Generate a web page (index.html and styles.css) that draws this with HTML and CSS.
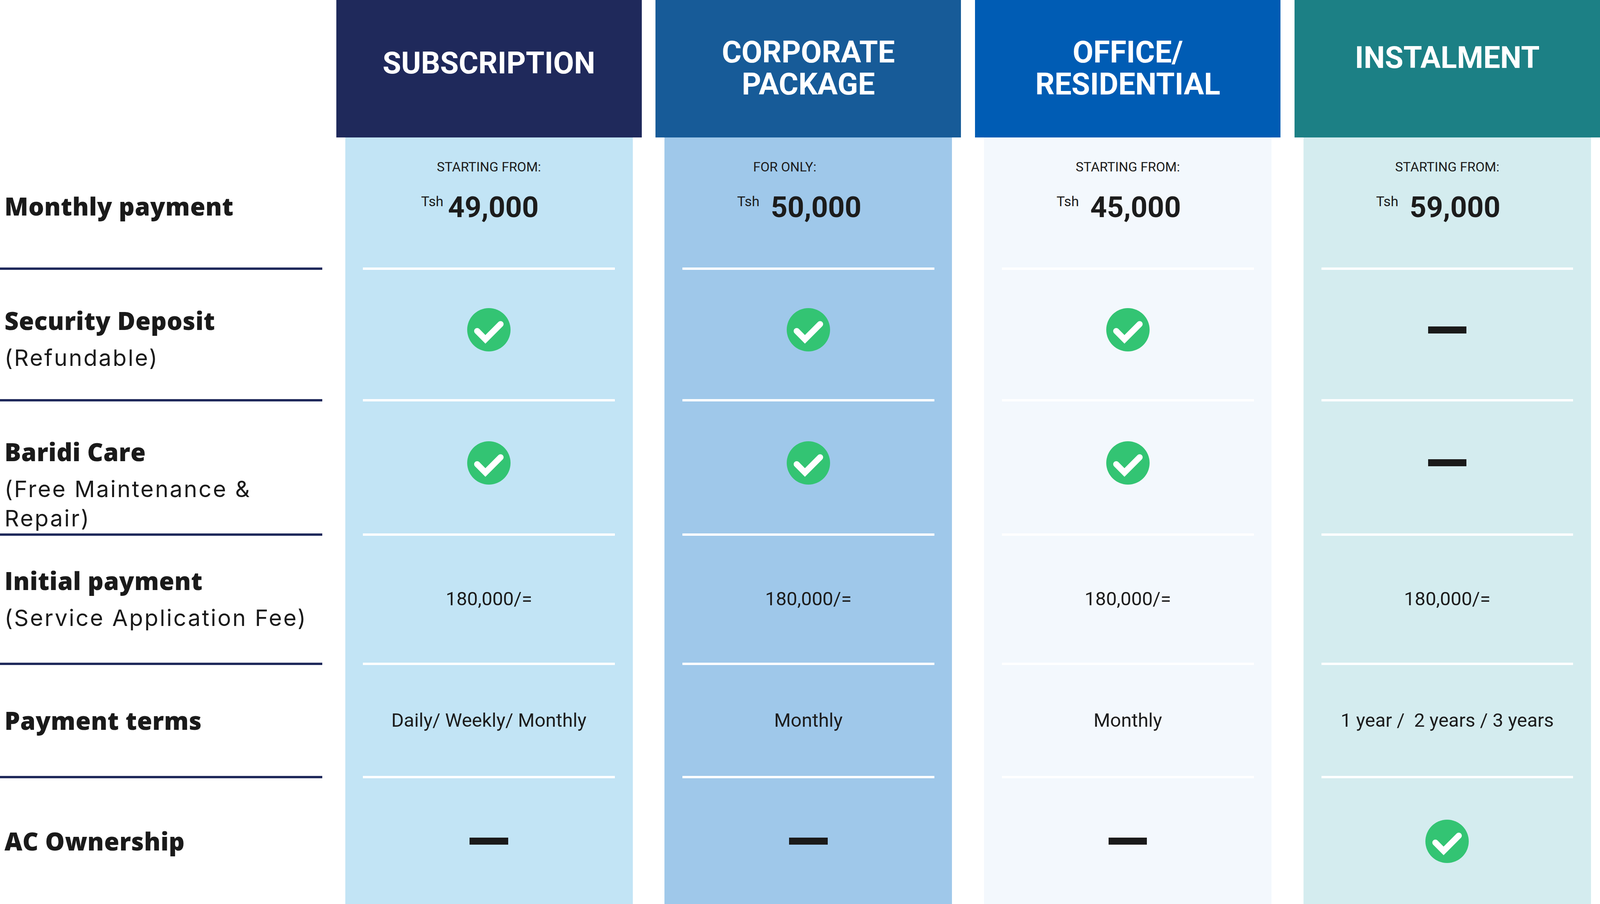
FILE: index.html
```html
<!DOCTYPE html>
<html lang="en">
<head>
<meta charset="utf-8">
<title>Plans comparison</title>
<link rel="stylesheet" href="styles.css">
</head>
<body>
<div class="table">
  <div class="col labels">
    <div class="head-spacer"></div>
    <div class="cell r1 lbl-first"><span class="lbl-b">Monthly payment</span></div>
    <div class="cell r2 lbl-two"><span class="lbl-b">Security Deposit</span><span class="lbl-l">(Refundable)</span></div>
    <div class="cell r3 lbl-low"><span class="lbl-b">Baridi Care</span><span class="lbl-l">(Free Maintenance &amp;<br>Repair)</span></div>
    <div class="cell r4"><span class="lbl-b">Initial payment</span><span class="lbl-l">(Service Application Fee)</span></div>
    <div class="cell r5"><span class="lbl-b">Payment terms</span></div>
    <div class="cell r6"><span class="lbl-b">AC Ownership</span></div>
  </div>

  <div class="col plan plan-sub">
    <div class="plan-head one-line"><h2>SUBSCRIPTION</h2></div>
    <div class="plan-body">
      <div class="cell r1 price-cell">
        <div class="from">STARTING FROM:</div>
        <div class="price tight"><span class="cur">Tsh</span><span class="amt">49,000</span></div>
      </div>
      <div class="cell r2 icon-cell"><svg class="check" viewBox="0 0 100 100"><circle cx="50" cy="50" r="50"/><path d="M23 53 L42 72 L77 37"/></svg></div>
      <div class="cell r3 icon-cell"><svg class="check" viewBox="0 0 100 100"><circle cx="50" cy="50" r="50"/><path d="M23 53 L42 72 L77 37"/></svg></div>
      <div class="cell r4"><span class="val">180,000/=</span></div>
      <div class="cell r5"><span class="val">Daily/ Weekly/ Monthly</span></div>
      <div class="cell r6"><span class="dash"></span></div>
    </div>
  </div>

  <div class="col plan plan-corp">
    <div class="plan-head"><h2>CORPORATE<br>PACKAGE</h2></div>
    <div class="plan-body">
      <div class="cell r1 price-cell">
        <div class="from from-left">FOR ONLY:</div>
        <div class="price"><span class="cur">Tsh</span><span class="amt">50,000</span></div>
      </div>
      <div class="cell r2 icon-cell"><svg class="check" viewBox="0 0 100 100"><circle cx="50" cy="50" r="50"/><path d="M23 53 L42 72 L77 37"/></svg></div>
      <div class="cell r3 icon-cell"><svg class="check" viewBox="0 0 100 100"><circle cx="50" cy="50" r="50"/><path d="M23 53 L42 72 L77 37"/></svg></div>
      <div class="cell r4"><span class="val">180,000/=</span></div>
      <div class="cell r5"><span class="val">Monthly</span></div>
      <div class="cell r6"><span class="dash"></span></div>
    </div>
  </div>

  <div class="col plan plan-office">
    <div class="plan-head"><h2>OFFICE/<br>RESIDENTIAL</h2></div>
    <div class="plan-body">
      <div class="cell r1 price-cell">
        <div class="from">STARTING FROM:</div>
        <div class="price"><span class="cur">Tsh</span><span class="amt">45,000</span></div>
      </div>
      <div class="cell r2 icon-cell"><svg class="check" viewBox="0 0 100 100"><circle cx="50" cy="50" r="50"/><path d="M23 53 L42 72 L77 37"/></svg></div>
      <div class="cell r3 icon-cell"><svg class="check" viewBox="0 0 100 100"><circle cx="50" cy="50" r="50"/><path d="M23 53 L42 72 L77 37"/></svg></div>
      <div class="cell r4"><span class="val">180,000/=</span></div>
      <div class="cell r5"><span class="val">Monthly</span></div>
      <div class="cell r6"><span class="dash"></span></div>
    </div>
  </div>

  <div class="col plan plan-inst">
    <div class="plan-head one-line high"><h2>INSTALMENT</h2></div>
    <div class="plan-body">
      <div class="cell r1 price-cell">
        <div class="from">STARTING FROM:</div>
        <div class="price"><span class="cur">Tsh</span><span class="amt">59,000</span></div>
      </div>
      <div class="cell r2 icon-cell"><span class="dash"></span></div>
      <div class="cell r3 icon-cell"><span class="dash"></span></div>
      <div class="cell r4"><span class="val">180,000/=</span></div>
      <div class="cell r5"><span class="val">1 year /&nbsp; 2 years / 3 years</span></div>
      <div class="cell r6"><svg class="check" viewBox="0 0 100 100"><circle cx="50" cy="50" r="50"/><path d="M23 53 L42 72 L77 37"/></svg></div>
    </div>
  </div>
</div>
</body>
</html>
```

FILE: styles.css
```css
/* Horizontal sizes are in vw (design width 4946px: 1vw = 49.46px),
   vertical sizes in px (design height 2315px). */
html, body {
  margin: 0;
  padding: 0;
  background: #ffffff;
  overflow: hidden;
}

.table {
  display: grid;
  grid-template-columns: 20.14vw repeat(4, minmax(0, 1fr));
  column-gap: 0.87vw;
  width: 100vw;
  height: 2315px;
  color: #1c1c1c;
  font-family: "Roboto", "Liberation Sans", sans-serif;
}

.col {
  display: flex;
  flex-direction: column;
  min-width: 0;
}

.head-spacer {
  height: 352px;
  flex: none;
}

/* rows */
.cell {
  display: flex;
  flex-direction: column;
  align-items: center;
  justify-content: center;
  box-sizing: border-box;
  border-bottom: 6px solid #ffffff;
  flex: none;
}
.r1 { height: 339px; }
.r2 { height: 337px; }
.r3 { height: 344px; }
.r4 { height: 331px; }
.r5 { height: 290px; }
.r6 { height: 322px; border-bottom: 0; }

/* label column */
.labels .cell {
  align-items: flex-start;
  padding-left: 0.28vw;
  border-bottom-color: #1f295b;
}
.labels .r6 { border-bottom: 0; }
.labels .lbl-first { padding-top: 18px; }
.labels .lbl-two { padding-top: 24px; }
.labels .lbl-low { padding-top: 90px; }

.lbl-b {
  font-family: "Open Sans", "Inter", sans-serif;
  font-weight: 800;
  font-size: 1.537vw;
  line-height: 1.2;
  color: #1a1a1a;
  letter-spacing: 0.01vw;
}
.lbl-l {
  font-family: "Inter", "Open Sans", sans-serif;
  font-weight: 400;
  font-size: 1.415vw;
  line-height: 75px;
  margin-top: 20px;
  letter-spacing: 0.085vw;
  color: #1a1a1a;
}

/* plan columns */
.plan-head {
  height: 352px;
  flex: none;
  display: flex;
  align-items: center;
  justify-content: center;
  box-sizing: border-box;
  color: #ffffff;
  text-align: center;
}
.plan-head.one-line { padding-bottom: 27px; }
.plan-head.high { padding-bottom: 54px; }
.plan-head h2 {
  margin: 0;
  font-weight: 700;
  font-size: 1.88vw;
  line-height: 1.06;
}

.plan-body {
  flex: 1;
  margin: 0 0.566vw;
  padding: 0 1.112vw;
}

.plan-sub .plan-head { background: #1f295b; }
.plan-sub .plan-body { background: #c2e4f5; }
.plan-corp .plan-head { background: #175b98; }
.plan-corp .plan-body { background: #9fc8ea; }
.plan-office .plan-head { background: #005cb4; }
.plan-office .plan-body { background: #f3f8fd; }
.plan-inst .plan-head { background: #1c8085; }
.plan-inst .plan-body { background: #d4ecef; }

/* monthly payment cell */
.price-cell {
  justify-content: flex-start;
  padding-top: 59px;
}
.from {
  font-size: 0.829vw;
  line-height: 1;
}
.from-left { padding-right: 2.95vw; }
.price {
  display: flex;
  align-items: flex-start;
  gap: 0.708vw;
  margin-top: 49px;
  padding-right: 1.13vw;
}
.price.tight { gap: 0.283vw; }
.cur {
  font-size: 0.869vw;
  line-height: 1;
  margin-top: 5px;
}
.amt {
  font-size: 1.82vw;
  font-weight: 700;
  line-height: 1;
}

/* values */
.val {
  font-size: 1.193vw;
  line-height: 1.2;
}
.icon-cell { padding-bottom: 24px; }

.check {
  width: 2.71vw;
  height: 2.71vw;
  display: block;
}
.check circle { fill: #33c473; }
.check path {
  fill: none;
  stroke: #ffffff;
  stroke-width: 14;
  stroke-linecap: round;
  stroke-linejoin: miter;
}

.dash {
  display: block;
  width: 2.406vw;
  height: 18px;
  background: #1a1a1a;
}
```
